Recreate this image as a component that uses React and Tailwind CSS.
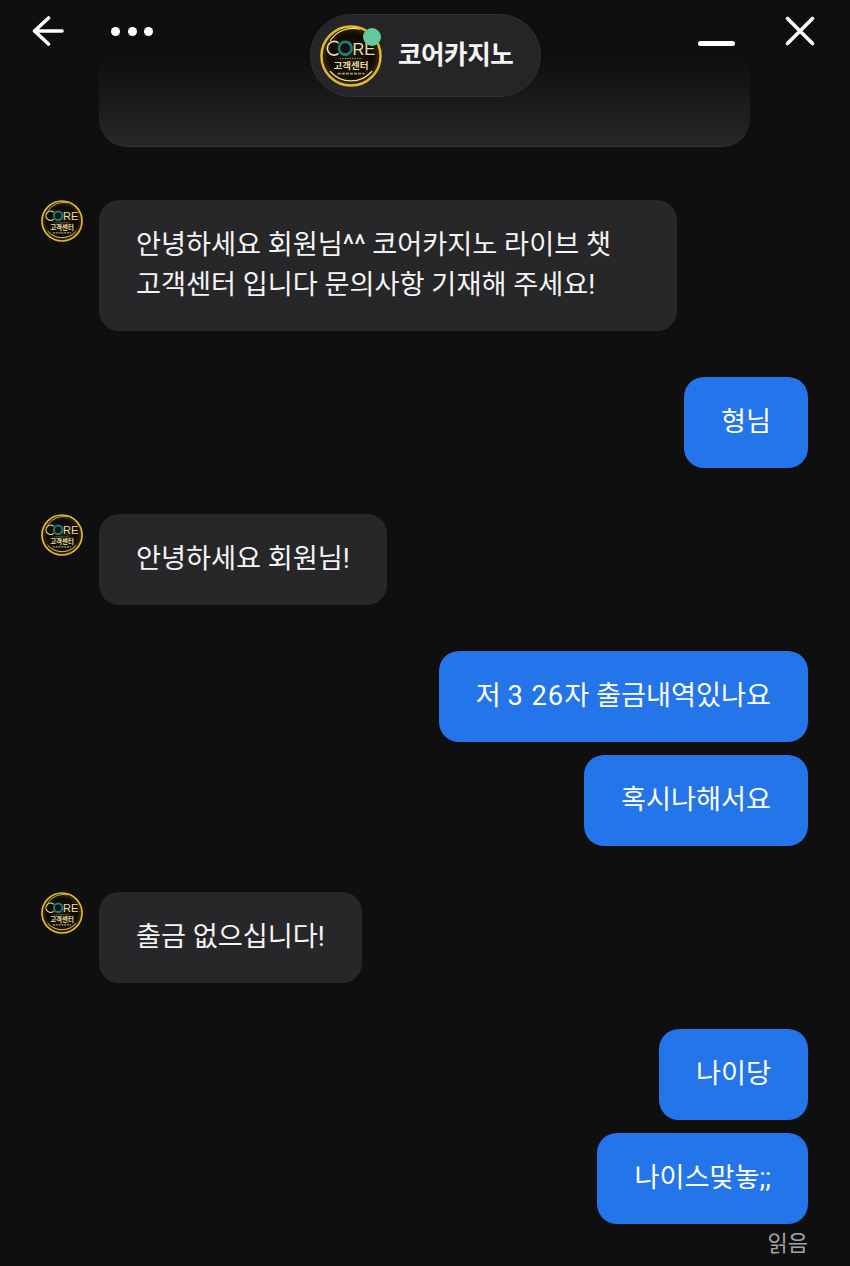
import { useId } from "react";

const FONT = "font-['Roboto','Noto_Sans_CJK_KR',sans-serif]";

function CoreLogo({ className }) {
  const id = useId();
  return (
    <svg viewBox="0 0 60 60" className={className}>
      <defs>
        <radialGradient id={id} cx="50%" cy="50%" r="50%">
          <stop offset="0%" stopColor="#221a08" />
          <stop offset="72%" stopColor="#0d0a03" />
          <stop offset="100%" stopColor="#3a2b06" />
        </radialGradient>
      </defs>
      <circle cx="30" cy="30" r="28.6" fill={`url(#${id})`} stroke="#e0b92f" strokeWidth="2.4" />
      <path d="M10 45A26.5 26.5 0 0 0 50 45" fill="none" stroke="#f5e08a" strokeWidth="1.2" strokeLinecap="round" />
      <path d="M10 15A26.5 26.5 0 0 1 38 4" fill="none" stroke="#f5e08a" strokeWidth="1" strokeLinecap="round" />
      {/* CORE 워드마크 */}
      <path d="M18 17.5A6.6 6.6 0 1 0 18 27.5" fill="none" stroke="#e9dcae" strokeWidth="1.6" />
      <circle cx="24.5" cy="22.5" r="6.1" fill="none" stroke="#1b7f86" strokeWidth="2.6" />
      <text x="31.5" y="29" fontSize="16" fontFamily="'Liberation Sans',sans-serif" fill="#e9dcae" textLength="22" lengthAdjust="spacingAndGlyphs">RE</text>
      <path d="M19 32.5H41" stroke="#8f8a72" strokeWidth="1" strokeDasharray="1.4 1" />
      <text x="30" y="43" textAnchor="middle" fontSize="9.2" fontWeight="700" fontFamily="'Noto Sans CJK KR',sans-serif" fill="#ead9a6">고객센터</text>
      <path d="M17 47H43" stroke="#a89c78" strokeWidth="1.6" strokeDasharray="3 1" />
    </svg>
  );
}

function IncomingRow({ children, width }) {
  return (
    <div className="flex items-start">
      <div className="w-[99px] shrink-0 pl-[41px]">
        <CoreLogo className="block h-[42px] w-[42px]" />
      </div>
      <div className={`rounded-[20px] bg-[#27272a] px-[37px] py-[26px] text-[27.2px] leading-[39px] text-[#f5f5f5] ${width}`}>
        {children}
      </div>
    </div>
  );
}

function OutgoingBubble({ children }) {
  return (
    <div className="rounded-[20px] bg-[#2474ea] px-[37px] py-[26px] text-[27.2px] leading-[39px] text-white whitespace-nowrap">
      {children}
    </div>
  );
}

export default function App() {
  return (
    <div className={`relative h-[1266px] w-[850px] overflow-hidden bg-[#0f0f10] ${FONT}`}>
      {/* 상단 바 */}
      <div className="absolute inset-x-0 top-0 z-10 flex h-[100px] items-start">
        <svg viewBox="0 0 34 32" className="ml-[32px] mt-[16px] h-[32px] w-[34px]" fill="none" stroke="#fff" strokeWidth="3.6" strokeLinecap="round" strokeLinejoin="round">
          <path d="M30 15H2.5M16.5 2L2.5 15L16.5 28" />
        </svg>
        <div className="ml-[45px] mt-[26.5px] flex gap-[7.5px]">
          <span className="h-[9px] w-[9px] rounded-full bg-white" />
          <span className="h-[9px] w-[9px] rounded-full bg-white" />
          <span className="h-[9px] w-[9px] rounded-full bg-white" />
        </div>
        <div className="absolute left-[310px] top-[14px] flex h-[83px] w-[231px] items-center rounded-full border border-[#303032] bg-[#252527] pl-[9px]">
          <div className="relative h-[62px] w-[62px]">
            <CoreLogo className="h-[62px] w-[62px]" />
            <span className="absolute right-[1px] top-[3px] h-[18px] w-[18px] rounded-full bg-[#64c998]" />
          </div>
          <span className="ml-[16px] text-[25.6px] font-bold leading-none tracking-[-0.5px] text-[#f5f5f5]">코어카지노</span>
        </div>
        <div className="absolute left-[698px] top-[41px] h-[5px] w-[37px] rounded-full bg-white" />
        <svg viewBox="0 0 32 32" className="absolute left-[784px] top-[15px] h-[32px] w-[32px]" fill="none" stroke="#fff" strokeWidth="3.6" strokeLinecap="round">
          <path d="M3.5 3.5L28.5 28.5M28.5 3.5L3.5 28.5" />
        </svg>
      </div>

      {/* 대화 내용 */}
      <div className="flex flex-col">
        <div className="ml-[99px] h-[147px] w-[651px] rounded-b-[28px] border-b border-[#333335] bg-gradient-to-b from-[#0f0f10] from-40% to-[#272729]" />

        <div className="mt-[53px]">
          <IncomingRow width="w-[578px] !leading-[39.5px]">
            안녕하세요 회원님^^ 코어카지노 라이브 챗<br />
            고객센터 입니다 문의사항 기재해 주세요!
          </IncomingRow>
        </div>

        <div className="mt-[46px] flex flex-col items-end pr-[42px]">
          <OutgoingBubble>형님</OutgoingBubble>
        </div>

        <div className="mt-[46px]">
          <IncomingRow width="w-[288px]">안녕하세요 회원님!</IncomingRow>
        </div>

        <div className="mt-[46px] flex flex-col items-end gap-[13px] pr-[42px]">
          <OutgoingBubble>저 <span className="tracking-[1px]">3 26</span>자 출금내역있나요</OutgoingBubble>
          <OutgoingBubble>혹시나해서요</OutgoingBubble>
        </div>

        <div className="mt-[46px]">
          <IncomingRow width="w-[263px]">출금 없으십니다!</IncomingRow>
        </div>

        <div className="mt-[46px] flex flex-col items-end gap-[13px] pr-[42px]">
          <OutgoingBubble>나이당</OutgoingBubble>
          <OutgoingBubble>나이스맞놓;;</OutgoingBubble>
          <span className="mt-[-8px] text-[22px] leading-[30px] text-[#a3a3a3]">읽음</span>
        </div>
      </div>
    </div>
  );
}
